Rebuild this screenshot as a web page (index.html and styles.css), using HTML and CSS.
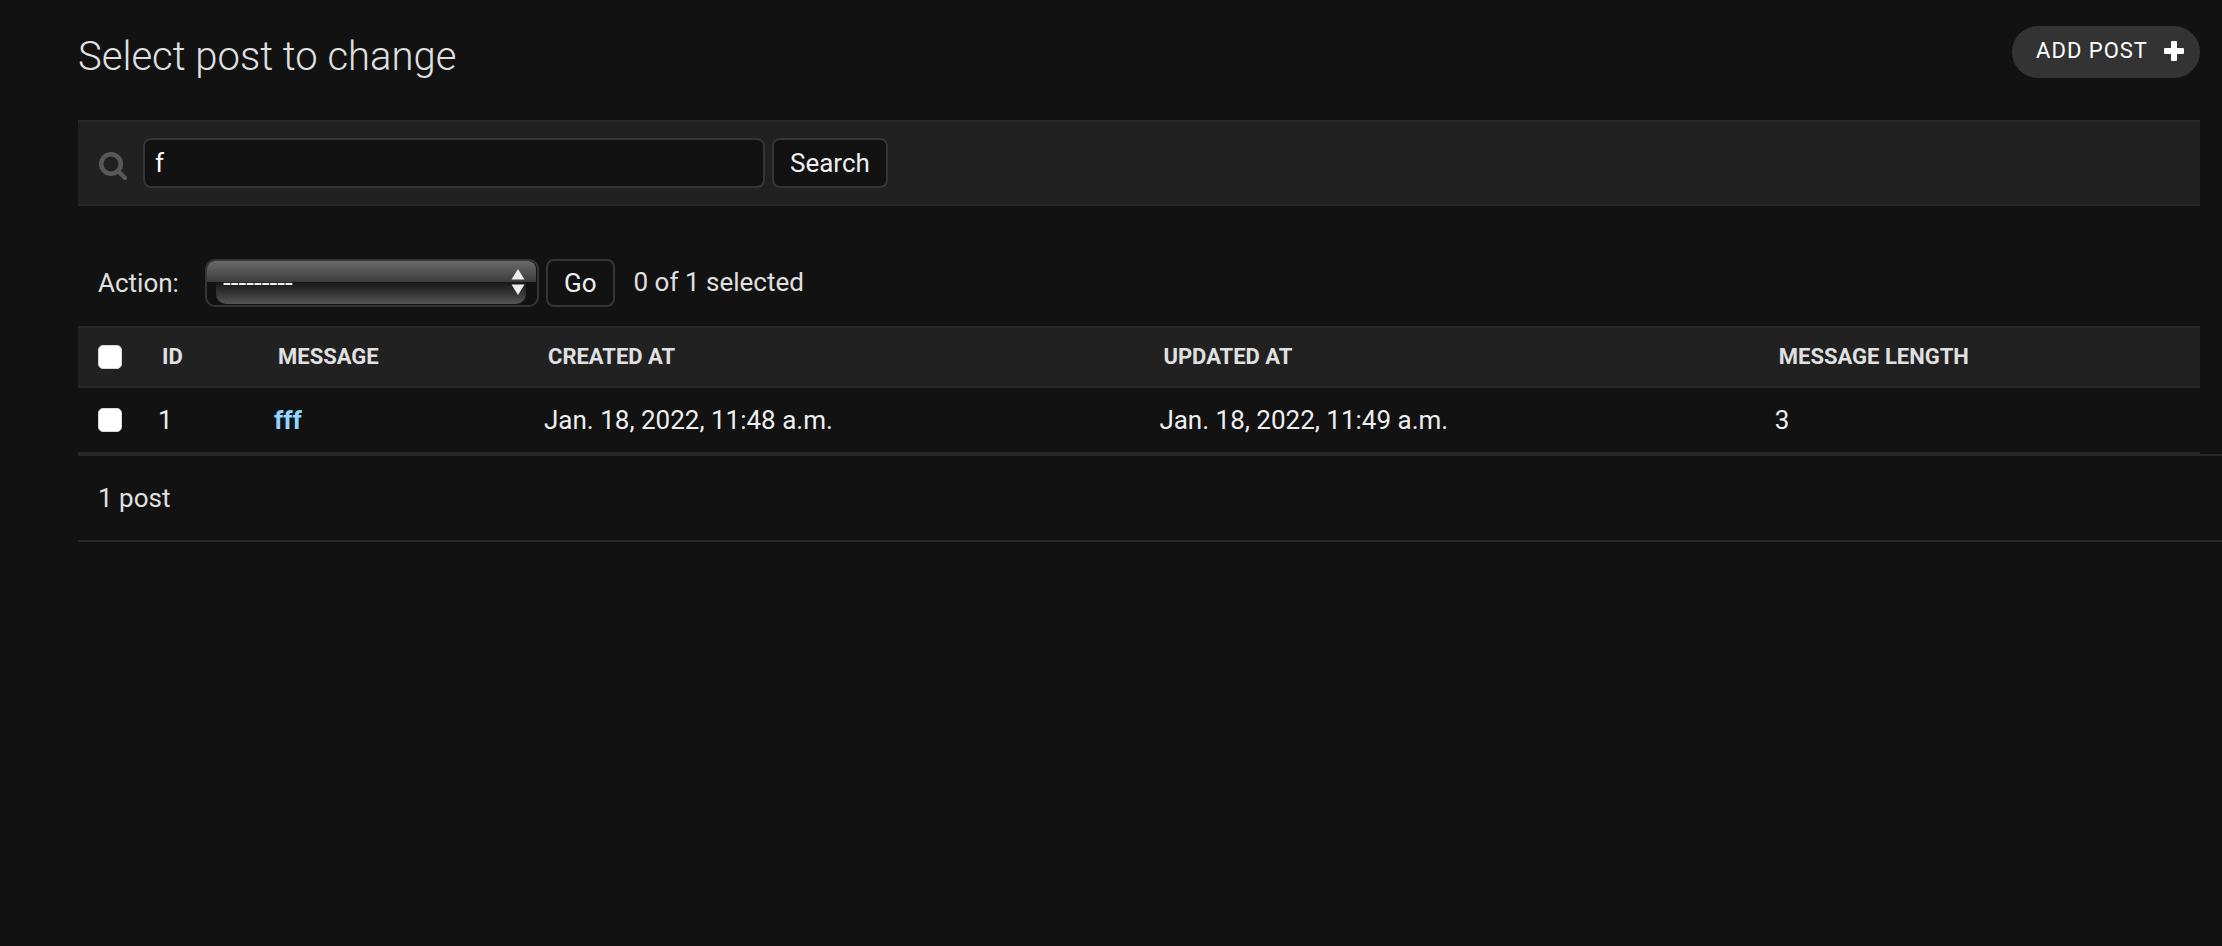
FILE: index.html
```html
<!DOCTYPE html>
<html lang="en">
<head>
    <meta charset="UTF-8">
    <title>Select post to change</title>
    <link rel="stylesheet" href="styles.css">
</head>
<body>
<div class="content">
    <div class="header">
        <h1>Select post to change</h1>
        <a href="#" class="addlink">Add post
            <svg class="plus" viewBox="0 0 20 20"><path d="M8 0h4q1 0 1 1v6h6q1 0 1 1v4q0 1-1 1h-6v6q0 1-1 1H8q-1 0-1-1v-6H1q-1 0-1-1V8q0-1 1-1h6V1q0-1 1-1z"/></svg>
        </a>
    </div>

    <form class="toolbar">
        <label for="searchbar" aria-label="Search posts">
            <svg class="search-icon" viewBox="0 0 28 28"><circle cx="12" cy="12" r="9.8"/><path d="M19 19l7 7"/></svg>
        </label>
        <input type="text" id="searchbar" class="searchbar" value="f">
        <button type="button" class="button">Search</button>
    </form>

    <form class="changelist">
        <div class="actions">
            <label for="action">Action:</label>
            <div class="select">
                <select id="action">
                    <option>---------</option>
                    <option>Delete selected posts</option>
                </select>
                <svg class="arrows" viewBox="0 0 14 26"><path d="M7 0l6.500 10.500h-13zM7 26l6.500-10.500h-13z"/></svg>
            </div>
            <button type="button" class="button">Go</button>
            <span class="counter">0 of 1 selected</span>
        </div>

        <table class="results">
            <colgroup>
                <col class="col-check">
                <col class="col-id">
                <col class="col-message">
                <col class="col-date">
                <col class="col-date">
                <col>
            </colgroup>
            <thead>
            <tr>
                <th class="check"><input type="checkbox" aria-label="Select all posts"></th>
                <th>ID</th>
                <th>Message</th>
                <th>Created at</th>
                <th>Updated at</th>
                <th>Message length</th>
            </tr>
            </thead>
            <tbody>
            <tr>
                <td class="check"><input type="checkbox" aria-label="Select post 1"></td>
                <td>1</td>
                <td><a href="#">fff</a></td>
                <td>Jan. 18, 2022, 11:48 a.m.</td>
                <td>Jan. 18, 2022, 11:49 a.m.</td>
                <td>3</td>
            </tr>
            </tbody>
        </table>

        <p class="paginator">1 post</p>
    </form>
</div>
</body>
</html>
```

FILE: styles.css
```css
*{
    box-sizing: border-box;
    margin: 0;
    padding: 0;
}

body{
    background: #121212;
    color: #e0e0e0;
    font-family: Roboto, "Liberation Sans", sans-serif;
    font-size: 26px;
    line-height: 32px;
}

.content{
    padding: 26px 22px 0 78px;
}

/* title and add button */
.header{
    display: flex;
    justify-content: space-between;
    align-items: flex-start;
    height: 94px;
}
.header h1{
    padding-top: 7px;
    font-size: 40px;
    line-height: 48px;
    font-weight: 300;
}
.addlink{
    display: flex;
    align-items: center;
    gap: 16px;
    height: 52px;
    padding: 0 16px 2px 24px;
    border-radius: 26px;
    background: #333333;
    color: #ffffff;
    font-size: 22px;
    letter-spacing: 1px;
    text-transform: uppercase;
    text-decoration: none;
}
.plus{
    width: 20px;
    height: 20px;
    fill: #ffffff;
}

/* search */
.toolbar{
    display: flex;
    align-items: center;
    gap: 7px;
    padding: 16px 20px;
    border-top: 2px solid #282828;
    border-bottom: 2px solid #282828;
    background: #212121;
}
.search-icon{
    display: block;
    width: 28px;
    height: 28px;
    margin: 6px 9px 0 1px;
    fill: none;
    stroke: #585858;
    stroke-width: 4.500;
    stroke-linecap: round;
}
.searchbar{
    width: 622px;
    height: 50px;
    padding: 0 10px;
    border: 2px solid #353535;
    border-radius: 8px;
    outline: none;
    background: #121212;
    color: #ffffff;
    font-family: inherit;
    font-size: 26px;
}
.button{
    height: 50px;
    padding: 0 16px;
    border: 2px solid #353535;
    border-radius: 8px;
    background: #121212;
    color: #eeeeee;
    font-family: inherit;
    font-size: 26px;
    cursor: pointer;
}

/* actions */
.actions{
    display: flex;
    align-items: center;
    gap: 7px;
    padding: 53px 20px 19px;
}
.actions label{
    width: 100px;
}
.actions .button{
    height: 48px;
}
.counter{
    padding: 0 0 2px 12px;
}
.select{
    position: relative;
    width: 334px;
    height: 48px;
    border: 2px solid #353535;
    border-radius: 10px;
}
/* glossy upper and lower halves behind the select */
.select::before,
.select::after{
    content: "";
    position: absolute;
    z-index: -1;
}
.select::before{
    top: 0;
    left: 0;
    right: 1px;
    height: 21px;
    border-radius: 8px 8px 0 0;
    background: linear-gradient(#6a6a6a, #3c3c3c);
}
.select::after{
    top: 21px;
    left: 9px;
    right: 11px;
    height: 22px;
    border-radius: 0 0 10px 10px;
    background: linear-gradient(#161616, #545454);
}
.select select{
    width: 100%;
    height: 100%;
    padding: 0 40px 2px 16px;
    border: none;
    outline: none;
    appearance: none;
    background: transparent;
    color: #eeeeee;
    font-family: inherit;
    font-size: 28px;
}
.arrows{
    position: absolute;
    top: 8px;
    right: 12px;
    width: 14px;
    height: 26px;
    fill: #eeeeee;
    pointer-events: none;
}

/* results */
.results{
    width: 100%;
    table-layout: fixed;
    border-collapse: separate;
    border-spacing: 0;
}
.col-check{
    width: 64px;
}
.col-id{
    width: 116px;
}
.col-message{
    width: 270px;
}
.col-date{
    width: 29%;
}
.results th{
    height: 62px;
    padding-left: 20px;
    border-top: 2px solid #282828;
    border-bottom: 2px solid #282828;
    background: #212121;
    font-size: 22px;
    font-weight: bold;
    text-align: left;
    text-transform: uppercase;
}
.results td{
    height: 66px;
    padding-left: 16px;
    border-bottom: 2px solid #282828;
    color: #eeeeee;
}
.results .check{
    padding-left: 20px;
}
.results a{
    color: #90d5ff;
    font-weight: bold;
    text-decoration: none;
}
.check input{
    display: block;
    width: 24px;
    height: 24px;
    appearance: none;
    border: 1px solid #d8d8d8;
    border-radius: 5px;
    background: #ffffff;
}
.check input:checked{
    background: #81d4fa;
}

.paginator{
    margin-right: -22px;
    padding: 26px 20px;
    border-top: 2px solid #282828;
    border-bottom: 2px solid #282828;
}
```
